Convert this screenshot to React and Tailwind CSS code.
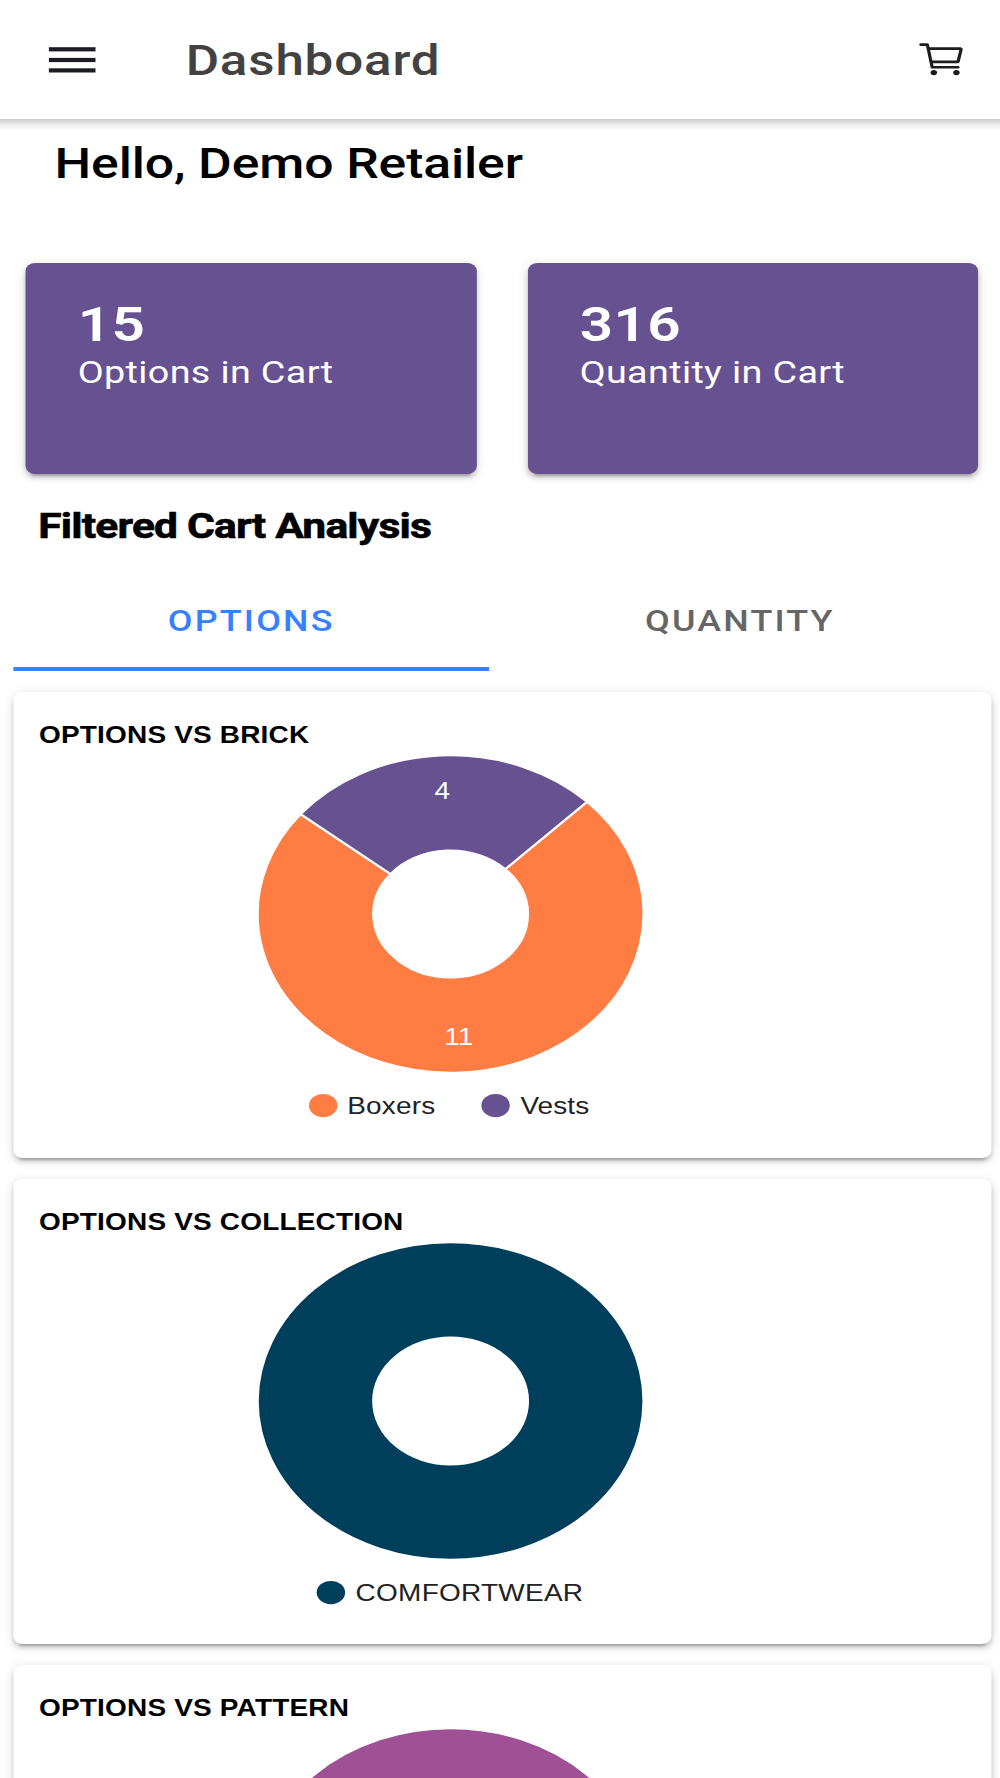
import React, { useState } from 'react';

const stats = [
  { value: 15, label: 'Options in Cart' },
  { value: 316, label: 'Quantity in Cart' }
];

const tabs = ['OPTIONS', 'QUANTITY'];

const charts = [
  {
    title: 'OPTIONS VS BRICK',
    startAngle: 45,
    slices: [
      { name: 'Boxers', value: 11, color: '#ff7c43', labelX: 366.2, labelY: 300, dotX: 254.7, textX: 274.4, textWidth: 72.3 },
      { name: 'Vests', value: 4, color: '#665191', labelX: 352.5, labelY: 54.5, dotX: 396.4, textX: 416.8, textWidth: 56.5 }
    ]
  },
  {
    title: 'OPTIONS VS COLLECTION',
    startAngle: 0,
    slices: [{ name: 'COMFORTWEAR', value: 15, color: '#003f5c', dotX: 261, textX: 281.3, textWidth: 187 }]
  },
  {
    title: 'OPTIONS VS PATTERN',
    startAngle: 0,
    slices: [{ value: 15, color: '#a05195' }]
  }
];

// Donut geometry
const CX = 359.4;
const CY = 169;
const OUTER = 157.7;
const INNER = 64.5;

const point = (radius, angle) => {
  const rad = (angle * Math.PI) / 180;
  return `${CX + radius * Math.sin(rad)} ${CY - radius * Math.cos(rad)}`;
};

// radii grow by the 1px that the white outline covers on each side
const slicePath = (start, end) => {
  const large = end - start > 180 ? 1 : 0;
  const outer = OUTER + 1;
  const inner = INNER - 1;
  return `M${point(outer, start)} A${outer} ${outer} 0 ${large} 1 ${point(outer, end)} L${point(inner, end)} A${inner} ${inner} 0 ${large} 0 ${point(inner, start)} Z`;
};

function DonutChart({ slices, startAngle }) {
  const total = slices.reduce((sum, s) => sum + s.value, 0);
  let angle = startAngle;

  return (
    <svg viewBox="0 0 719 390" className="block w-[719px] h-[390px] font-['Liberation_Sans',sans-serif] text-[23px]">
      {slices.length === 1 ? (
        <circle cx={CX} cy={CY} r={(OUTER + INNER) / 2} fill="none" stroke={slices[0].color} strokeWidth={OUTER - INNER} />
      ) : (
        slices.map(slice => {
          const start = angle;
          angle += (slice.value / total) * 360;
          return (
            <g key={slice.name}>
              <path d={slicePath(start, angle)} fill={slice.color} stroke="#fff" strokeWidth="2" />
              <text x={slice.labelX} y={slice.labelY} fill="#fff" textAnchor="middle" fontSize="23">{slice.value}</text>
            </g>
          );
        })
      )}
      {slices.filter(slice => slice.name).map(slice => (
        <g key={slice.name}>
          <circle cx={slice.dotX} cy="360.6" r="11.7" fill={slice.color} />
          <text x={slice.textX} y="368.8" fill="#222" textLength={slice.textWidth}>{slice.name}</text>
        </g>
      ))}
    </svg>
  );
}

function MenuIcon() {
  return (
    <svg viewBox="0 0 38.5 26" className="w-[38.5px] h-[26px]" fill="#1c1d21">
      <rect y="0.2" width="38.5" height="4.2" />
      <rect y="10.9" width="38.5" height="4.2" />
      <rect y="21.3" width="38.5" height="4.2" />
    </svg>
  );
}

function CartIcon() {
  return (
    <svg viewBox="0 0 512 512" className="w-[42.5px] h-[42.5px]" fill="none" stroke="#1c1d21" strokeWidth="32" strokeLinecap="round" strokeLinejoin="round">
      <circle cx="176" cy="416" r="16" fill="#1c1d21" />
      <circle cx="400" cy="416" r="16" fill="#1c1d21" />
      <path d="M48 80h64l48 272h256" />
      <path d="M160 288h249.44a8 8 0 0 0 7.85-6.43l28.8-144a8 8 0 0 0-7.85-9.57H128" />
    </svg>
  );
}

export default function App() {
  const [activeTab, setActiveTab] = useState('OPTIONS');

  return (
    <div className="w-[1000px] h-[1778px] overflow-hidden bg-white">
      {/* 822px layout, widened to fill the screen */}
      <div className="w-[822px] origin-top-left scale-x-[1.2165] font-[Roboto,sans-serif] text-black">

        {/* HEADER */}
        <header className="h-[119px] flex items-center pl-[40.3px] pr-[26.2px]">
          <MenuIcon />
          <h1 className="ml-[73.8px] mt-[2px] flex-1 text-[42px] leading-none font-medium tracking-[0.7px] text-[#424242]">Dashboard</h1>
          <CartIcon />
        </header>
        <div className="h-[11px] bg-linear-to-b from-[#cbcbcb] via-[#ececec] to-white"></div>

        <h2 className="h-[133px] pt-[12px] pl-[44.8px] text-[42.5px] leading-[43px] font-medium tracking-[-0.1px] whitespace-nowrap">Hello, Demo Retailer</h2>

        {/* CART TOTALS */}
        <div className="flex gap-[42.3px] pl-[21.4px]">
          {stats.map(stat => (
            <div key={stat.label} className="w-[370.3px] h-[211px] rounded-[8px] bg-[#665191] text-white pl-[42.5px] pt-[37px] shadow-[0_7px_2px_-5px_rgba(0,0,0,0.2),0_4px_4px_0_rgba(0,0,0,0.14),0_2px_11px_0_rgba(0,0,0,0.12)]">
              <p className="text-[48px] leading-[50px] font-semibold tracking-[0.4px]">{stat.value}</p>
              <p className="text-[31px] leading-[46px] tracking-[0.3px] whitespace-nowrap">{stat.label}</p>
            </div>
          ))}
        </div>

        <h3 className="h-[92px] pt-[35px] pl-[31.5px] text-[35px] leading-[36px] font-bold tracking-[-0.67px] whitespace-nowrap [-webkit-text-stroke:0.6px_black]">Filtered Cart Analysis</h3>

        {/* TABS */}
        <div className="flex gap-[10px] h-[105px] pl-[10.7px]">
          {tabs.map(tab => (
            <button
              key={tab}
              onClick={() => setActiveTab(tab)}
              className={`w-[391.7px] h-full pt-[9px] border-b-[4px] text-[29.5px] font-medium tracking-[1.8px] ${
                activeTab === tab ? 'text-[#3880ff] border-[#3880ff]' : 'text-[#666666] border-transparent'
              }`}
            >
              {tab}
            </button>
          ))}
        </div>

        {/* CHART CARDS */}
        <div className="flex flex-col gap-[21px] pl-[10.7px] pr-[7.2px] pt-[21px]">
          {charts.map(chart => (
            <section key={chart.title} className="h-[465.5px] shrink-0 rounded-[8px] bg-white shadow-[0_7px_2px_-5px_rgba(0,0,0,0.2),0_4px_4px_0_rgba(0,0,0,0.14),0_2px_11px_0_rgba(0,0,0,0.12)]">
              <h4 className="h-[53px] pt-[30px] pl-[21.4px] font-['Liberation_Sans',sans-serif] text-[23px] leading-[26px] font-bold tracking-[0.15px]">{chart.title}</h4>
              <DonutChart slices={chart.slices} startAngle={chart.startAngle} />
            </section>
          ))}
        </div>

      </div>
    </div>
  );
}
